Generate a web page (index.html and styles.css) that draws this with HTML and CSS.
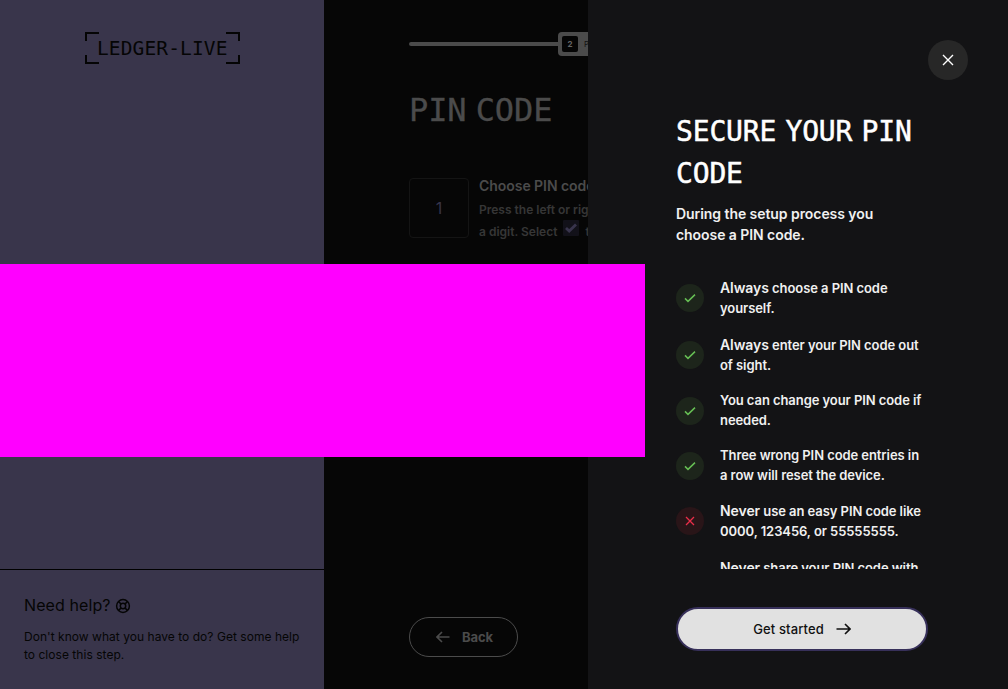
FILE: index.html
```
<!DOCTYPE html>
<html lang="en">
<head>
<meta charset="utf-8">
<title>Ledger Live</title>
<link rel="stylesheet" href="styles.css">
</head>
<body>
<div class="app">
  <aside class="side">
    <div class="logo"><svg class="logo-frame" width="155" height="32" viewBox="0 0 155 32"><path d="M14 1H1v8M141 1h13v8M14 31H1v-8M141 31h13v-8"/></svg><span>LEDGER-LIVE</span></div>
    <div class="help">
      <div class="help-title">Need help?
        <svg width="16" height="16" viewBox="0 0 16 16"><circle cx="8" cy="8" r="6.4"/><circle cx="8" cy="8" r="2.7"/><path d="M3.5 3.5l2.6 2.6M12.5 3.5L9.9 6.1M3.5 12.5l2.6-2.6M12.5 12.5L9.9 9.9"/></svg>
      </div>
      <p>Don't know what you have to do? Get some help<br>to close this step.</p>
    </div>
  </aside>
  <main class="main">
    <div class="progress"><div class="bar"></div><div class="stage"><b>2</b><span>PIN code</span></div></div>
    <h1>PIN CODE</h1>
    <div class="step">
      <div class="num">1</div>
      <div class="step-text">
        <h2>Choose PIN code</h2>
        <p>Press the left or right</p>
        <p>a digit. Select <svg class="tick" width="16" height="16" viewBox="0 0 16 16"><rect width="16" height="16" rx="1"/><path d="M3 8.1l3.2 3L13 4.5"/></svg> to</p>
      </div>
    </div>
    <button class="back"><svg width="14" height="12" viewBox="0 0 14 12"><path d="M13.5 6H1M6 1L1 6l5 5"/></svg>Back</button>
  </main>
  <section class="drawer">
    <button class="close"><svg width="12" height="12" viewBox="0 0 12 12"><path d="M1 1l10 10M11 1L1 11"/></svg></button>
    <div class="content">
      <h3>SECURE YOUR PIN<br>CODE</h3>
      <p class="intro">During the setup process you<br>choose a PIN code.</p>
      <ul>
        <li class="strong"><i><svg width="14" height="14" viewBox="0 0 14 14"><path d="M2 7.4l3 3L12 3.6"/></svg></i><span><b>Always</b> choose a PIN code<br>yourself.</span></li>
        <li><i><svg width="14" height="14" viewBox="0 0 14 14"><path d="M2 7.4l3 3L12 3.6"/></svg></i><span><b>Always</b> enter your PIN code out<br>of sight.</span></li>
        <li class="low"><i><svg width="14" height="14" viewBox="0 0 14 14"><path d="M2 7.4l3 3L12 3.6"/></svg></i><span>You can change your PIN code if<br>needed.</span></li>
        <li class="low last-ok"><i><svg width="14" height="14" viewBox="0 0 14 14"><path d="M2 7.4l3 3L12 3.6"/></svg></i><span>Three wrong PIN code entries in<br>a row will reset the device.</span></li>
        <li class="no"><i><svg width="14" height="14" viewBox="0 0 14 14"><path d="M3 3l8 8M11 3l-8 8"/></svg></i><span><b>Never</b> use an easy PIN code like<br>0000, 123456, or 55555555.</span></li>
        <li class="next"><span><b>Never</b> share your PIN code with</span></li>
      </ul>
    </div>
    <button class="start">Get started<svg width="15" height="12" viewBox="0 0 15 12"><path d="M.5 6H14M9 1l5 5-5 5"/></svg></button>
  </section>
  <div class="block"></div>
</div>
</body>
</html>
```
FILE: styles.css
```
* { box-sizing: border-box; }
body { margin: 0; background: #060606; font-family: Inter, sans-serif; }
h1, h2, h3, p, ul { margin: 0; padding: 0; }
button { font-family: inherit; padding: 0; }
svg { fill: none; stroke: currentColor; flex: none; }
.app { position: relative; width: 1008px; height: 689px; overflow: hidden; display: flex; }
.side { width: 324px; background: #39354b; color: #050505; display: flex; flex-direction: column; justify-content: space-between; }
.logo { position: relative; margin: 32px 0 0 85px; width: 156px; height: 32px; padding-left: 12px; font: 19.5px/33px "DejaVu Sans Mono", monospace; letter-spacing: .13px; }
.logo-frame { position: absolute; left: 0; top: 0; stroke-width: 2; }
.help { height: 120px; border-top: 1px solid #000; padding: 25px 24px 0; }
.help-title { display: flex; align-items: center; gap: 4px; font-size: 16px; line-height: 20px; letter-spacing: .1px; }
.help-title svg { stroke-width: 1.5; margin-top: 1px; }
.help p { margin-top: 13px; font-size: 12px; line-height: 18px; letter-spacing: .035px; white-space: nowrap; }
.main { width: 264px; padding: 32px 0 32px 85px; background: #060606; color: #4b4b4b; overflow: hidden; display: flex; flex-direction: column; white-space: nowrap; }
.progress { display: flex; align-items: center; height: 24px; }
.bar { flex: none; width: 149px; height: 4px; border-radius: 2px 0 0 2px; background: #4b4b4b; }
.stage { flex: none; height: 24px; width: 90px; border-radius: 4px; background: #4b4b4b; padding: 4px; display: flex; align-items: center; gap: 6px; color: #111; font-size: 8px; }
.stage b { width: 16px; height: 16px; border-radius: 2px; background: #050505; color: #656565; line-height: 16px; text-align: center; font-size: 8px; }
h1 { margin-top: 33px; font: 32px/42px "DejaVu Sans Mono", monospace; word-spacing: -10px; letter-spacing: -.1px; -webkit-text-stroke: .3px #4b4b4b; }
.step { margin-top: 47px; display: flex; gap: 10px; }
.num { flex: none; width: 60px; height: 60px; border: 1px solid #141414; border-radius: 4px; text-align: center; font-size: 16px; line-height: 58px; color: #37344a; }
.step-text { margin-top: -1px; }
h2 { font-size: 14px; font-weight: 600; line-height: 17px; letter-spacing: -.05px; }
.step-text p { font-size: 12px; font-weight: 600; line-height: 21px; height: 21px; letter-spacing: 0; color: #363636; }
.step-text h2 + p { margin-top: 5px; }
.tick { margin: 0 3px; stroke-width: 2.8; color: #38344c; }
.tick rect { fill: #121119; stroke: none; }
.back { margin-top: auto; width: 109px; height: 40px; flex: none; display: flex; align-items: center; gap: 12px; padding-left: 26px; border: 1px solid #4b4b4b; border-radius: 20px; background: none; color: #4b4b4b; font-size: 13px; font-weight: 700; letter-spacing: -.1px; }
.back svg { stroke-width: 1.6; }
.drawer { position: relative; width: 420px; background: #131315; color: #fff; display: flex; flex-direction: column; padding: 40px 40px 38px 88px; }
.close { align-self: flex-end; flex: none; width: 40px; height: 40px; border: 0; border-radius: 50%; background: #272727; color: #fff; display: flex; align-items: center; justify-content: center; }
.close svg { stroke-width: 1.4; }
.content { margin-top: 31px; height: 458px; overflow: hidden; white-space: nowrap; }
h3 { font: 28px/42px "DejaVu Sans Mono", monospace; word-spacing: -7.5px; letter-spacing: -.15px; -webkit-text-stroke: .5px #fff; }
.intro { margin-top: 8px; font-size: 14px; line-height: 21px; font-weight: 600; letter-spacing: -.06px; color: #f0f0f0; }
ul { margin-top: 33px; list-style: none; }
li { display: flex; align-items: center; gap: 16px; height: 40px; margin-bottom: 15px; font-size: 13px; line-height: 20px; font-weight: 600; letter-spacing: -.07px; color: #f0f0f0; }
.strong { margin-bottom: 17px; }
.last-ok { margin-bottom: 16px; }
.no { margin-bottom: 17px; }
.next { height: 20px; padding-left: 44px; margin: 0; }
li b { font-size: 14px; line-height: 1; font-weight: 600; }
li i { flex: none; width: 28px; height: 28px; border-radius: 50%; background: #1d251b; color: #66be54; display: flex; align-items: center; justify-content: center; }
.low i { margin-top: 2px; }
li svg { stroke-width: 1.5; }
.no i { background: #291518; color: #ea2e49; }
.no svg { stroke-width: 1.3; }
.start { margin-top: auto; flex: none; width: 252px; height: 44px; border: 2px solid #37305a; border-radius: 22px; background: #e1e1e1; color: #101010; display: flex; align-items: center; justify-content: center; gap: 12px; font-size: 13px; font-weight: 500; letter-spacing: .12px; }
.start svg { stroke-width: 1.6; }
.block { position: absolute; left: 0; top: 264px; width: 645px; height: 193px; background: #f0f; }
```
